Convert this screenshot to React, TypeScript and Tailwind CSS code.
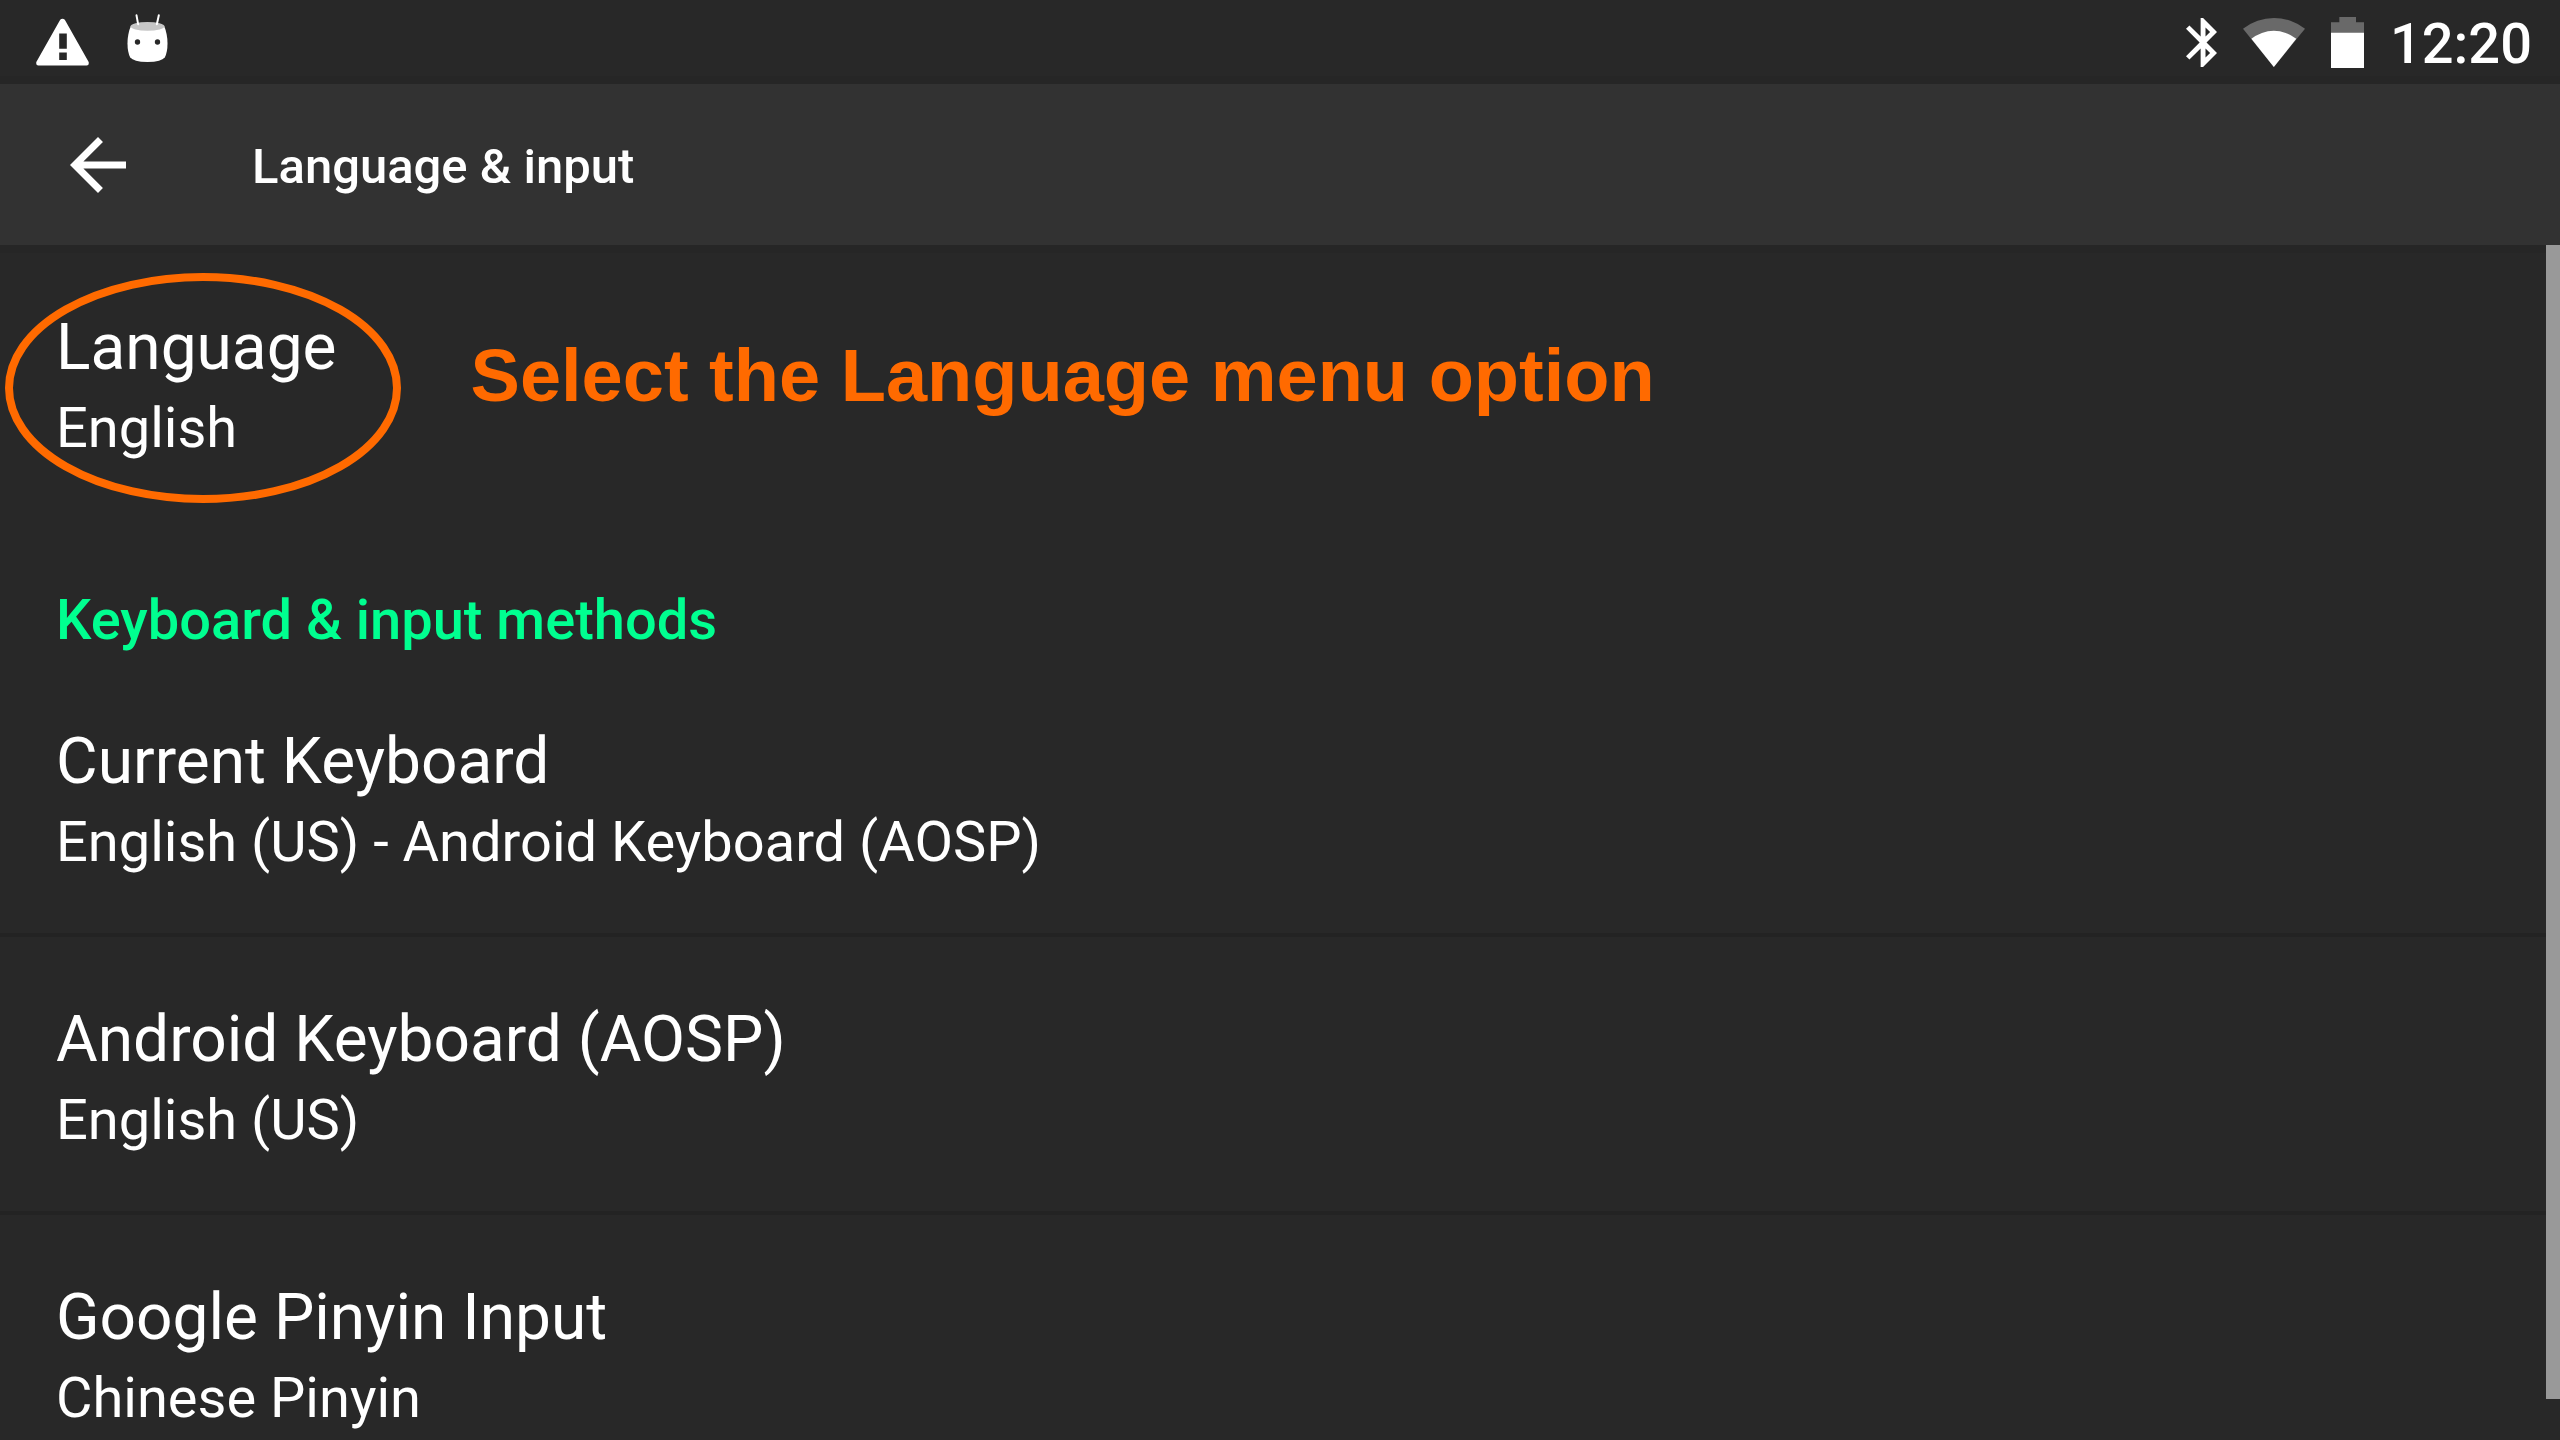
import React from "react";

const rows = [
  { title: "Current Keyboard", sub: "English (US) - Android Keyboard (AOSP)" },
  { title: "Android Keyboard (AOSP)", sub: "English (US)" },
  { title: "Google Pinyin Input", sub: "Chinese Pinyin" },
];

function Labels({ title, sub }: { title: string; sub: string }) {
  return (
    <>
      <span className="block text-[64px] leading-[80px]">{title}</span>
      <span className="block text-[56px] leading-[80px]">{sub}</span>
    </>
  );
}

function WarningIcon() {
  return (
    <svg className="h-12 w-[53px]" viewBox="0 0 160 144" fill="#fff" aria-hidden="true">
      <path
        fillRule="evenodd"
        d="M73 5Q80 -2 87 5L159 132Q161 143 153 143H7Q-1 143 1 132ZM70 46V92H93V46ZM70 104V126H93V104Z"
      />
    </svg>
  );
}

function AndroidIcon() {
  return (
    <svg className="h-12 w-[41px]" viewBox="0 0 122 144" aria-hidden="true">
      <path
        fill="#fff"
        d="M11 36Q1 60 1 88Q1 115 9 130Q18 144 61 144Q104 144 113 130Q121 115 121 88Q121 60 111 36Z"
      />
      <ellipse cx="61" cy="37" rx="51" ry="13" fill="#c6c6c6" />
      <path d="M28 4L33 31M95 4L89 31" stroke="#fff" strokeWidth="6" strokeLinecap="round" />
      <circle cx="31" cy="84" r="8" fill="#282828" />
      <circle cx="91" cy="84" r="8" fill="#282828" />
    </svg>
  );
}

function BluetoothIcon() {
  return (
    <svg className="h-[49px] w-[31px]" viewBox="5 2 12.71 20" fill="#fff" aria-hidden="true">
      <path d="M17.71 7.71L12 2h-1v7.59L6.41 5 5 6.41 10.59 12 5 17.59 6.41 19 11 14.41V22h1l5.71-5.71-4.3-4.29 4.3-4.29zM13 5.83l1.88 1.88L13 9.59V5.83zm1.88 10.46L13 18.17v-3.76l1.88 1.88z" />
    </svg>
  );
}

function WifiIcon() {
  return (
    <svg className="h-[49px] w-[62px]" viewBox="0 0 185 146" aria-hidden="true">
      <path fill="#696969" d="M0 32A150 150 0 0 1 185 32L92 146Z" />
      <path fill="#fff" d="M25 62A106 106 0 0 1 159 62L92 146Z" />
    </svg>
  );
}

function BatteryIcon() {
  return (
    <svg className="h-[51px] w-[33px]" viewBox="0 0 99 153" aria-hidden="true">
      <path fill="#696969" d="M25 0H75V16H99V48H0V16H25Z" />
      <path fill="#fff" d="M0 47H99V153H0Z" />
    </svg>
  );
}

export default function App() {
  return (
    <div className="flex h-screen flex-col overflow-hidden bg-[#282828] font-['Roboto',sans-serif] text-white">
      <div className="flex h-[84px] shrink-0 items-center justify-between border-b-8 border-[#262626] pl-9 pr-7">
        <div className="flex items-center gap-[38px]">
          <span className="pt-2">
            <WarningIcon />
          </span>
          <AndroidIcon />
        </div>
        <div className="flex items-center pt-2">
          <BluetoothIcon />
          <span className="pl-[26px]">
            <WifiIcon />
          </span>
          <span className="pl-[26px]">
            <BatteryIcon />
          </span>
          <span className="pl-[26px] pt-1 text-[56px] font-medium leading-[64px]">12:20</span>
        </div>
      </div>
      <header className="flex h-[161px] shrink-0 items-center gap-[126px] bg-[#323232] pl-[70px]">
        <button type="button" aria-label="Back" className="block">
          <svg className="h-14 w-14" viewBox="4 4 16 16" fill="#fff" aria-hidden="true">
            <path d="M20 11H7.83l5.59-5.59L12 4l-8 8 8 8 1.41-1.41L7.83 13H20v-2z" />
          </svg>
        </button>
        <h1 className="pt-1 text-[49px] font-medium leading-[56px]">Language &amp; input</h1>
      </header>
      <main className="flex min-h-0 flex-1">
        <div className="min-w-0 flex-1">
          <div className="flex h-[303px] items-start gap-[134px] border-t-8 border-[#262626] pl-14 pt-[55px]">
            <button type="button" className="relative block text-left">
              <Labels title="Language" sub="English" />
              <svg
                className="absolute -left-[51px] -top-[35px] h-[230px] w-[396px]"
                viewBox="0 0 396 230"
                fill="none"
                aria-hidden="true"
              >
                <ellipse cx="198" cy="115" rx="194" ry="111" stroke="#ff6a00" strokeWidth="8" />
              </svg>
            </button>
            <p className="pt-5 font-['Liberation_Sans',sans-serif] text-[74px] font-bold leading-[96px] text-[#ff6a00]">
              Select the Language menu option
            </p>
          </div>
          <h2 className="pl-14 pt-[33px] text-[56px] font-medium leading-[78px] text-[#00ff90]">
            Keyboard &amp; input methods
          </h2>
          <ul>
            {rows.map((r) => (
              <li key={r.title} className="border-b-4 border-[#232323]">
                <button type="button" className="block w-full pb-[51px] pl-14 pt-[63px] text-left">
                  <Labels title={r.title} sub={r.sub} />
                </button>
              </li>
            ))}
          </ul>
        </div>
        <div className="w-[14px] shrink-0 pb-[41px]" aria-hidden="true">
          <div className="h-full bg-[#999]" />
        </div>
      </main>
    </div>
  );
}
